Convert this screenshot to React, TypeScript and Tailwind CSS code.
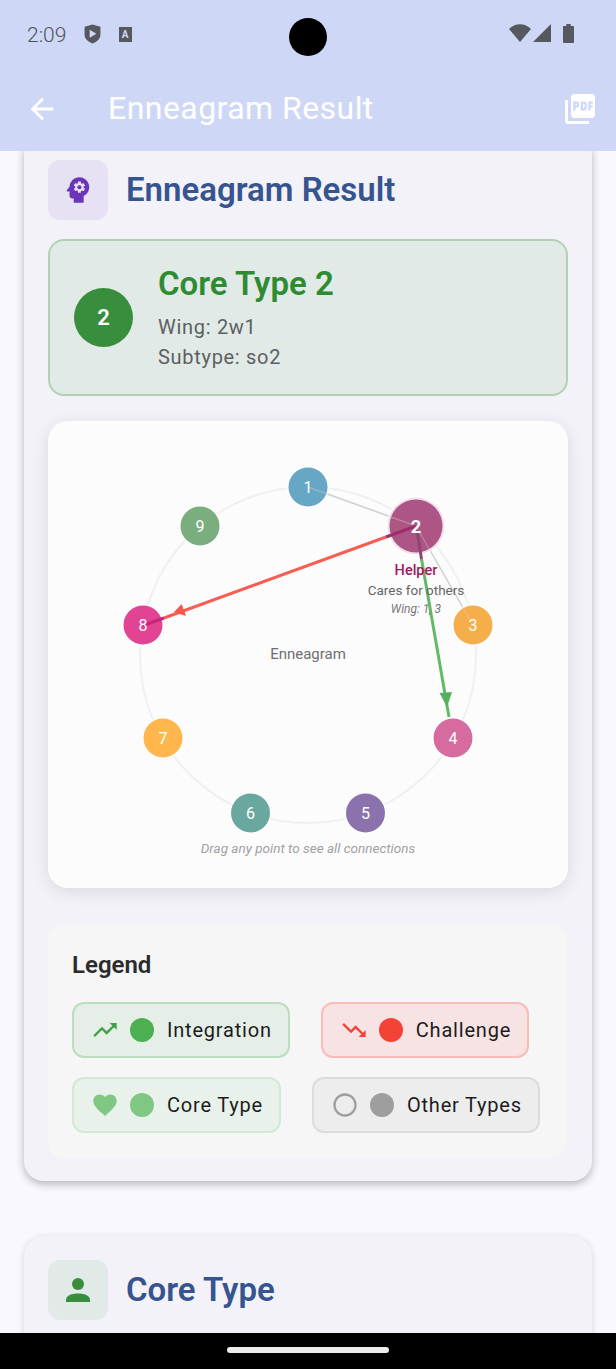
import React from "react";
import { MdArrowBack, MdPictureAsPdf, MdPsychology, MdTrendingUp, MdTrendingDown, MdFavorite, MdRadioButtonUnchecked } from "react-icons/md";

const nodes = [
  { n: 1, x: 308, y: 487, c: "#66a7c5" },
  { n: 3, x: 473, y: 625, c: "#f4ae4a" },
  { n: 4, x: 453, y: 738, c: "#d66b9f" },
  { n: 5, x: 365.5, y: 813, c: "#8c72ac" },
  { n: 6, x: 250.5, y: 813, c: "#6aa89f" },
  { n: 7, x: 163, y: 738, c: "#ffb74d" },
  { n: 8, x: 143, y: 625, c: "#e34393" },
  { n: 9, x: 200, y: 526, c: "#7bae7f" },
];

function Chart() {
  return (
    <svg viewBox="48 421 520 467" className="block w-[520px] h-[467px]" style={{ fontFamily: "Roboto, sans-serif" }}>
      <circle cx="308" cy="655" r="168" fill="none" stroke="#f0f0f0" strokeWidth="2" />
      <line x1="308" y1="487" x2="416" y2="526" stroke="#cfcfcf" strokeWidth="1.5" />
      <line x1="416" y1="526" x2="473" y2="625" stroke="#cfcfcf" strokeWidth="1.5" />
      {nodes.map((p) => (
        <g key={p.n}>
          <circle cx={p.x} cy={p.y} r="21" fill="#ffffff" fillOpacity="0.75" />
          <circle cx={p.x} cy={p.y} r="19.5" fill={p.c} />
        </g>
      ))}
      <circle cx="416" cy="526" r="29.500" fill="#ffffff" />
      <circle cx="416" cy="526" r="28.500" fill="#f0e0ea" />
      <circle cx="416" cy="526" r="26.500" fill="#ad5585" />
      <line x1="308" y1="487" x2="416" y2="526" stroke="#d8d8d8" strokeOpacity="0.35" strokeWidth="1.5" />
      <line x1="416" y1="526" x2="473" y2="625" stroke="#d8d8d8" strokeOpacity="0.3" strokeWidth="1.5" />
      <line x1="386" y1="537" x2="164" y2="618" stroke="#fa5d52" strokeWidth="3" />
      <line x1="416" y1="526" x2="386" y2="537" stroke="#9c2f6b" strokeWidth="3" />
      <line x1="164" y1="618" x2="143" y2="625.5" stroke="#c9257c" strokeWidth="3" />
      <polygon points="174,612 186,616 181.700,604" fill="#f9554b" />
      <line x1="421.5" y1="559" x2="449" y2="717" stroke="#62ba67" strokeWidth="3" />
      <line x1="417" y1="530" x2="421.5" y2="559" stroke="#8f4670" strokeWidth="3" />
      <polygon points="447,707 439.5,693 452,692" fill="#57b05c" />
      <text x="416" y="532.5" textAnchor="middle" fontSize="18.5" fontWeight="700" fill="#ffffff">2</text>
      {nodes.map((p) => (
        <text key={p.n} x={p.x} y={p.y + 5.5} textAnchor="middle" fontSize="16" fill="#ffffff">{p.n}</text>
      ))}
      <text x="416" y="575" textAnchor="middle" fontSize="14.500" fontWeight="500" fill="#a0195f">Helper</text>
      <text x="416" y="595" textAnchor="middle" fontSize="13.500" fill="#666666">Cares for others</text>
      <text x="416" y="613" textAnchor="middle" fontSize="12" fontStyle="italic" fill="#777777">Wing: 1, 3</text>
      <text x="308" y="658.5" textAnchor="middle" fontSize="15" fill="#6f6f6f">Enneagram</text>
      <text x="308" y="853" textAnchor="middle" fontSize="13.500" fontStyle="italic" fill="#a0a0a0">Drag any point to see all connections</text>
    </svg>
  );
}

function Chip({ icon, dot, label, cls }: { icon: React.ReactNode; dot: string; label: string; cls: string }) {
  return (
    <div className={`flex items-center pl-[19px] pr-[16px] h-[56px] rounded-xl border-2 ${cls}`}>
      <span className="w-6 h-6 flex items-center justify-center">{icon}</span>
      <span className={`ml-[13px] w-6 h-6 rounded-full ${dot}`} />
      <span className="ml-[13px] text-[20px] tracking-[0.8px] text-[#1c1c1c]">{label}</span>
    </div>
  );
}

export default function App() {
  return (
    <div className="relative w-[616px] h-[1369px] overflow-hidden flex flex-col bg-[#f9f8fe] font-['Roboto',sans-serif]">
      <header className="h-[151px] shrink-0 bg-[#ced8f6] flex flex-col relative z-10">
        <div className="h-[68px] flex items-center justify-between pl-[27px] pr-[42px] text-[#4f525c]">
          <div className="flex items-center">
            <span className="mt-[4px] text-[21px] font-light">2:09</span>
            <svg viewBox="0 0 15 21" preserveAspectRatio="none" className="ml-[18px] w-[17px] h-[20px]"><path d="M7.5 0.5 14.5 3v8c0 4.500-3 7.800-7 9.500-4-1.700-7-5-7-9.500V3z" fill="#55585f" /><path d="M5 6l6 4.200-6 4.200z" fill="#ced8f6" /></svg>
            <svg viewBox="0 0 13 15" className="ml-[18px] w-[13px] h-[15px]"><rect width="13" height="15" fill="#55585f" /><text x="6" y="10.500" textAnchor="middle" fontSize="10" fontWeight="700" fill="#ced8f6">A</text></svg>
          </div>
          <div className="flex items-center -mt-[2px]">
            <svg viewBox="0 0 19 15" preserveAspectRatio="none" className="w-[22px] h-[18px]"><path d="M9.5 15 0 4.200C2.600 1.700 5.900.3 9.500.3s6.900 1.400 9.500 3.900z" fill="#55585f" /></svg>
            <svg viewBox="0 0 15 18" preserveAspectRatio="none" className="ml-[2px] w-[18px] h-[18px]"><path d="M15 0v18H0z" fill="#55585f" /></svg>
            <svg viewBox="0 0 10 20" preserveAspectRatio="none" className="ml-[12px] w-[11px] h-[19px]"><path d="M3 0h4v2h2a1 1 0 0 1 1 1v16a1 1 0 0 1-1 1H1a1 1 0 0 1-1-1V3a1 1 0 0 1 1-1h2z" fill="#55585f" /></svg>
          </div>
        </div>
        <div className="flex-1 flex items-center pl-[25px] pr-[18px] pb-[2px] text-white">
          <MdArrowBack className="w-[34px] h-[34px]" />
          <h1 className="ml-[49px] pb-[2px] text-[32px] tracking-[0.45px] font-normal">Enneagram Result</h1>
          <MdPictureAsPdf className="ml-auto w-[36px] h-[36px]" />
        </div>
      </header>
      <span className="absolute z-20 left-[289px] top-[18px] w-[38px] h-[38px] rounded-full bg-black" />

      <main className="flex-1 min-h-0 overflow-hidden px-6 flex flex-col gap-[55px]">
        <section className="shrink-0 -mt-[15px] rounded-[20px] bg-[#f3f2f9] shadow-[0_3px_8px_rgba(0,0,0,0.28)] px-6 pt-6 pb-[23px]">
          <div className="flex items-center gap-[18px]">
            <div className="w-[60px] h-[60px] rounded-xl bg-[#e6e2f4] flex items-center justify-center">
              <MdPsychology className="w-[34px] h-[34px] text-[#6a35b8]" />
            </div>
            <h2 className="text-[33px] font-semibold text-[#36548f]">Enneagram Result</h2>
          </div>
          <div className="mt-[19px] h-[157px] rounded-2xl border-2 border-[#b0d1b2] bg-[#e1eae6] flex items-center pl-6">
            <div className="w-[59px] h-[59px] rounded-full bg-[#388e3c] flex items-center justify-center text-white text-[22px] font-semibold">2</div>
            <div className="ml-[25px] pt-[2px]">
              <div className="text-[33px] leading-[36px] font-semibold text-[#2e8b32]">Core Type 2</div>
              <div className="mt-[11px] text-[20px] leading-[28px] tracking-[0.7px] text-[#5d6063]">Wing: 2w1</div>
              <div className="mt-[2px] text-[20px] leading-[28px] tracking-[0.7px] text-[#5d6063]">Subtype: so2</div>
            </div>
          </div>
          <div className="mt-[25px] rounded-[20px] bg-[#fdfcfd] shadow-[0_4px_18px_rgba(0,0,0,0.1)]">
            <Chart />
          </div>
          <div className="mt-9 w-[518px] h-[234px] rounded-2xl bg-[#f6f6f7] px-6 pt-6">
            <h3 className="text-[24px] leading-[34px] font-semibold text-[#2b2b2b]">Legend</h3>
            <div className="mt-[20px] flex flex-wrap gap-x-[31px] gap-y-[19px]">
              <Chip cls="border-[#bcdebe] bg-[#e5efe7]" dot="bg-[#4caf50]" label="Integration" icon={<MdTrendingUp className="w-7 h-7 shrink-0 text-[#43a047]" />} />
              <Chip cls="border-[#fbbcb8] bg-[#f7e3e3]" dot="bg-[#f44336]" label="Challenge" icon={<MdTrendingDown className="w-7 h-7 shrink-0 text-[#f44336]" />} />
              <Chip cls="border-[#d3e9d4] bg-[#e9f2ea]" dot="bg-[#81c784]" label="Core Type" icon={<MdFavorite className="w-7 h-7 shrink-0 text-[#81c784]" />} />
              <Chip cls="border-[#dcdcdc] bg-[#ededee]" dot="bg-[#9e9e9e]" label="Other Types" icon={<MdRadioButtonUnchecked className="w-7 h-7 shrink-0 text-[#9e9e9e]" />} />
            </div>
          </div>
        </section>
        <section className="shrink-0 rounded-t-[20px] bg-[#f3f2f9] shadow-[0_1px_6px_rgba(0,0,0,0.15)] px-6 pt-6 pb-6">
          <div className="flex items-center gap-[18px]">
            <div className="w-[60px] h-[60px] rounded-xl bg-[#e1eae6] flex items-center justify-center">
              <svg viewBox="0 0 24 24" className="w-6 h-6"><circle cx="12" cy="6" r="6" fill="#388e3c" /><path d="M0 24v-2C0 17.500 6 15.500 12 15.500S24 17.500 24 22v2z" fill="#388e3c" /></svg>
            </div>
            <h2 className="text-[33px] font-semibold text-[#36548f]">Core Type</h2>
          </div>
        </section>
      </main>

      <footer className="absolute z-10 left-0 right-0 bottom-0 h-[36px] bg-black flex items-center justify-center">
        <span className="w-[162px] h-[6px] rounded-full bg-[#ececec] -mt-[2px]" />
      </footer>
    </div>
  );
}
